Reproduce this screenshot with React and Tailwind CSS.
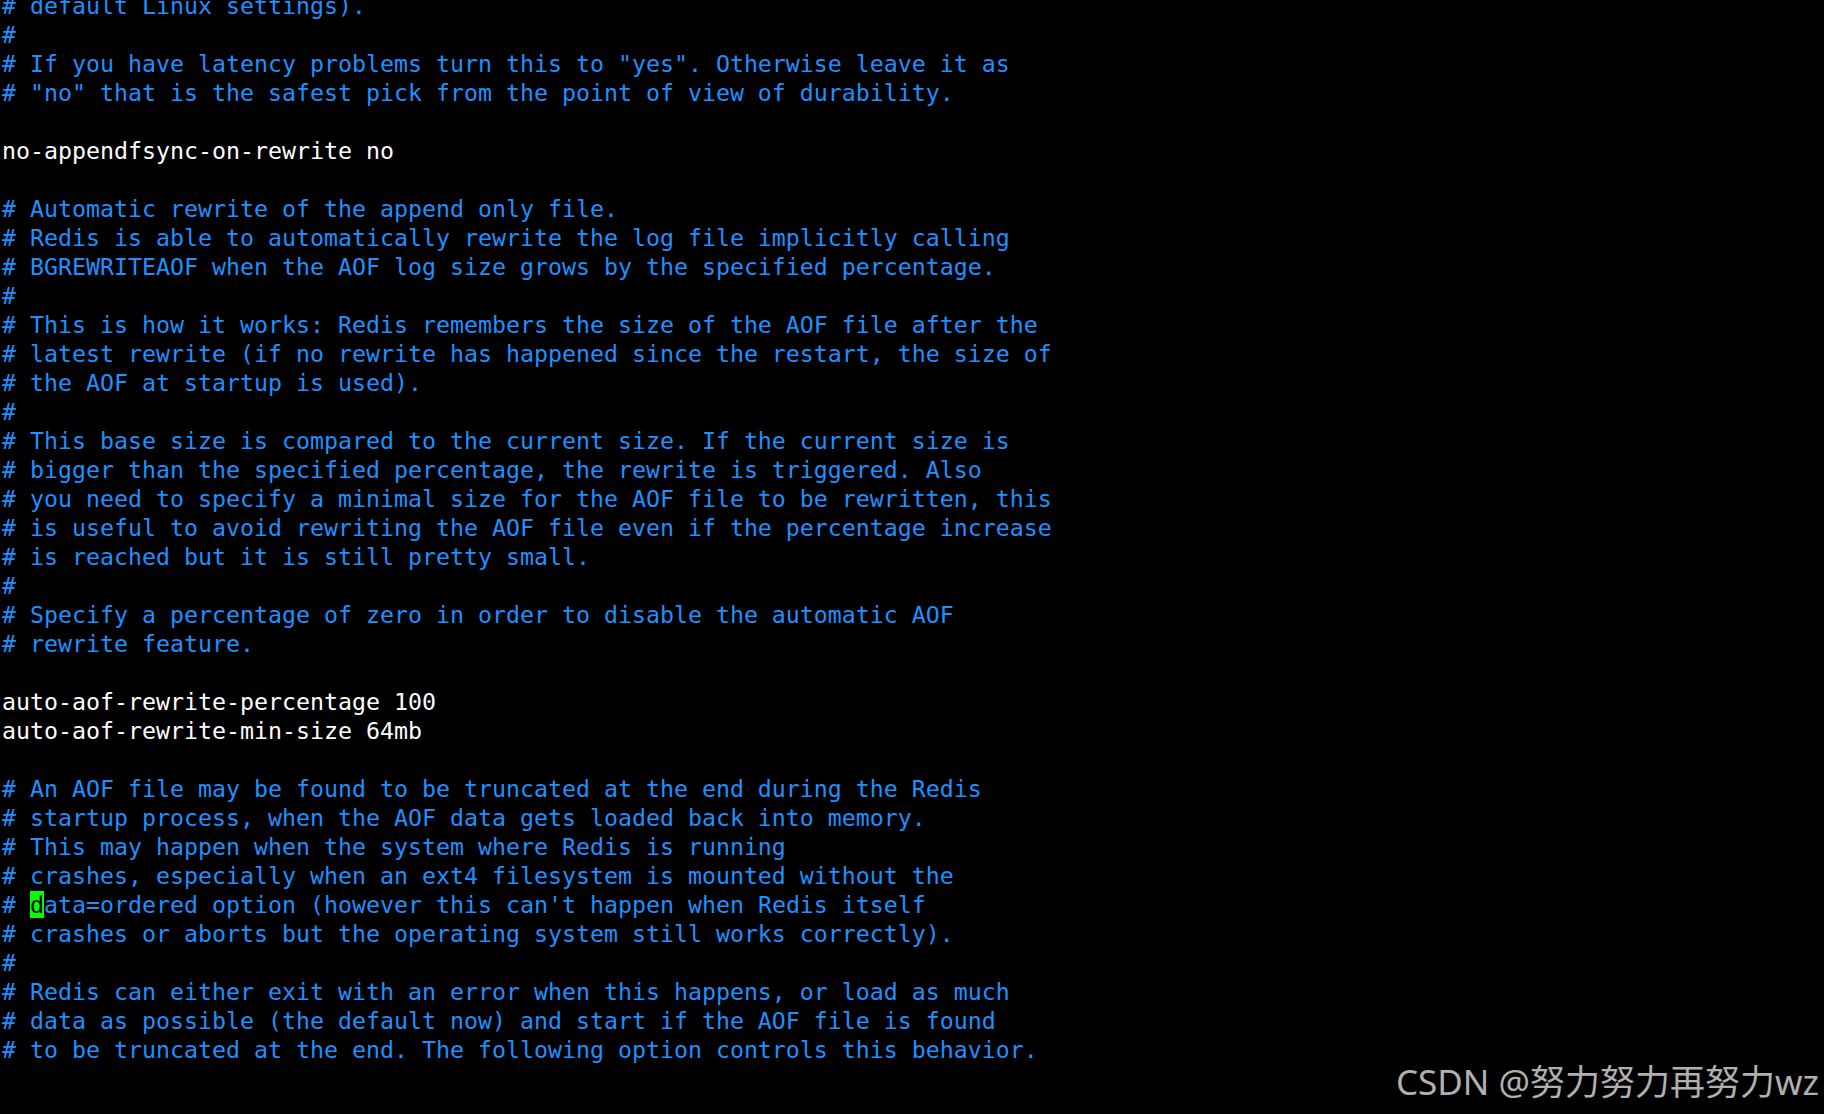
const lines = [
  ["c", "# default Linux settings)."],
  ["c", "#"],
  ["c", "# If you have latency problems turn this to \"yes\". Otherwise leave it as"],
  ["c", "# \"no\" that is the safest pick from the point of view of durability."],
  ["w", ""],
  ["w", "no-appendfsync-on-rewrite no"],
  ["w", ""],
  ["c", "# Automatic rewrite of the append only file."],
  ["c", "# Redis is able to automatically rewrite the log file implicitly calling"],
  ["c", "# BGREWRITEAOF when the AOF log size grows by the specified percentage."],
  ["c", "#"],
  ["c", "# This is how it works: Redis remembers the size of the AOF file after the"],
  ["c", "# latest rewrite (if no rewrite has happened since the restart, the size of"],
  ["c", "# the AOF at startup is used)."],
  ["c", "#"],
  ["c", "# This base size is compared to the current size. If the current size is"],
  ["c", "# bigger than the specified percentage, the rewrite is triggered. Also"],
  ["c", "# you need to specify a minimal size for the AOF file to be rewritten, this"],
  ["c", "# is useful to avoid rewriting the AOF file even if the percentage increase"],
  ["c", "# is reached but it is still pretty small."],
  ["c", "#"],
  ["c", "# Specify a percentage of zero in order to disable the automatic AOF"],
  ["c", "# rewrite feature."],
  ["w", ""],
  ["w", "auto-aof-rewrite-percentage 100"],
  ["w", "auto-aof-rewrite-min-size 64mb"],
  ["w", ""],
  ["c", "# An AOF file may be found to be truncated at the end during the Redis"],
  ["c", "# startup process, when the AOF data gets loaded back into memory."],
  ["c", "# This may happen when the system where Redis is running"],
  ["c", "# crashes, especially when an ext4 filesystem is mounted without the"],
  ["cursor", ""],
  ["c", "# crashes or aborts but the operating system still works correctly)."],
  ["c", "#"],
  ["c", "# Redis can either exit with an error when this happens, or load as much"],
  ["c", "# data as possible (the default now) and start if the AOF file is found"],
  ["c", "# to be truncated at the end. The following option controls this behavior."],
];

export default function App() {
  return (
    <div className="w-[1824px] h-[1114px] bg-black overflow-hidden relative">
      <div
        className="mt-[-9px] pl-[2px] text-[23.25px] leading-[29px]"
        style={{ fontFamily: '"DejaVu Sans Mono", monospace' }}
      >
        {lines.map(([k, t], i) => {
          if (k === "cursor") {
            return (
              <div key={i} className="h-[29px] whitespace-pre text-[#1e90ff]">
                {"# "}
                <span className="bg-[#00ff00] text-black">d</span>
                {"ata=ordered option (however this can't happen when Redis itself"}
              </div>
            );
          }
          return (
            <div
              key={i}
              className={
                "h-[29px] whitespace-pre " +
                (k === "c" ? "text-[#1e90ff]" : "text-white")
              }
            >
              {t}
            </div>
          );
        })}
      </div>
      <div
        className="absolute right-[5px] bottom-[15px] text-[35px] leading-none text-[#b0b0b0]"
        style={{ fontFamily: '"Noto Sans", "Noto Sans CJK SC", sans-serif' }}
      >
        CSDN @努力努力再努力wz
      </div>
    </div>
  );
}
